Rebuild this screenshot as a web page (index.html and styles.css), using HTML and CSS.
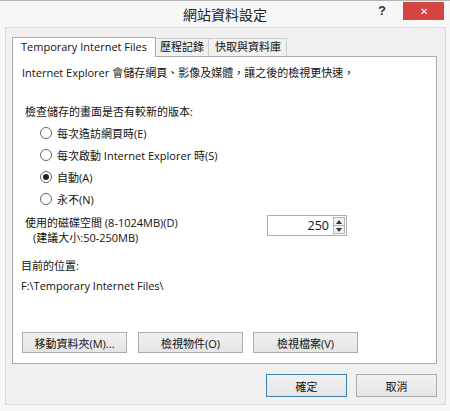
FILE: index.html
```html
<!DOCTYPE html>
<html lang="zh-Hant">
<head>
    <meta charset="UTF-8">
    <title>網站資料設定</title>
    <link rel="stylesheet" href="styles.css">
</head>
<body>
    <div class="window">
        <div class="titlebar">
            <span></span>
            <span class="title">網站資料設定</span>
            <div class="controls">
                <span class="help">?</span>
                <span class="close">&#x2715;</span>
            </div>
        </div>
        <div class="client">
            <div class="tabs">
                <span class="tab active">Temporary Internet Files</span>
                <span class="tab">歷程記錄</span>
                <span class="tab wide">快取與資料庫</span>
            </div>
            <div class="panel">
                <p class="intro">Internet Explorer 會儲存網頁、影像及媒體，讓之後的檢視更快速，</p>
                <p class="question">檢查儲存的畫面是否有較新的版本:</p>
                <div class="radios">
                    <label class="radio"><span class="dot"></span>每次造訪網頁時(E)</label>
                    <label class="radio"><span class="dot"></span>每次啟動 Internet Explorer 時(S)</label>
                    <label class="radio"><span class="dot checked"></span>自動(A)</label>
                    <label class="radio"><span class="dot"></span>永不(N)</label>
                </div>
                <div class="disk">
                    <div class="disk-label">
                        <span>使用的磁碟空間 (8-1024MB)(D)</span>
                        <span class="hint">(建議大小:50-250MB)</span>
                    </div>
                    <div class="spinner">
                        <span class="value">250</span>
                        <span class="arrows">
                            <span class="arrow">
                                <svg width="6" height="4" viewBox="0 0 6 4"><path d="M0 4 L3 0 L6 4 Z" fill="#333"/></svg>
                            </span>
                            <span class="arrow">
                                <svg width="6" height="4" viewBox="0 0 6 4"><path d="M0 0 L6 0 L3 4 Z" fill="#333"/></svg>
                            </span>
                        </span>
                    </div>
                </div>
                <p class="loc-label">目前的位置:</p>
                <p class="loc-path">F:\Temporary Internet Files\</p>
                <div class="panel-buttons">
                    <button class="btn">移動資料夾(M)...</button>
                    <button class="btn">檢視物件(O)</button>
                    <button class="btn">檢視檔案(V)</button>
                </div>
            </div>
            <div class="footer">
                <button class="btn default">確定</button>
                <button class="btn">取消</button>
            </div>
        </div>
    </div>
</body>
</html>
```

FILE: styles.css
```css
/* styles.css */

body {
    margin: 0;
    padding: 0;
    background-color: #ffffff;
    font-family: "Open Sans", "Noto Sans CJK TC", sans-serif;
    font-size: 11px;
    color: #111;
}

p {
    margin: 0;
}

.window {
    width: 450px;
    height: 411px;
    box-sizing: border-box;
    border-top: 1px solid #b4b4b4;
    background-color: #f7f7f7;
}

.titlebar {
    height: 26px;
    display: grid;
    grid-template-columns: 1fr auto 1fr;
    align-items: start;
}

.title {
    font-family: "Noto Sans CJK TC", sans-serif;
    font-size: 14px;
    line-height: 26px;
    color: #222;
}

.controls {
    display: flex;
    justify-content: flex-end;
}

.help {
    width: 16px;
    margin-right: 13px;
    line-height: 20px;
    font-family: "Liberation Sans", sans-serif;
    font-weight: bold;
    font-size: 13px;
    color: #333;
    text-align: center;
}

.close {
    width: 41px;
    height: 18px;
    margin-top: 1px;
    margin-right: 6px;
    background-color: #d54440;
    color: #fff;
    font-size: 10px;
    line-height: 18px;
    text-align: center;
}

.client {
    margin: 0 4px 0 5px;
    height: 378px;
    box-sizing: border-box;
    border: 1px solid #dadada;
    background-color: #f0f0f0;
    padding: 9px 0 0 6px;
}

.tabs {
    display: flex;
    align-items: flex-end;
    height: 19px;
}

.tab {
    height: 17px;
    line-height: 16px;
    padding: 0 4px;
    border: 1px solid #d0d0d0;
    border-bottom: none;
    background-color: #f0f0f0;
    margin-left: -1px;
    white-space: nowrap;
}

.tab.wide {
    padding: 0 5px 0 6px;
}

.tab.active {
    height: 19px;
    margin-left: 0;
    padding: 0 8px;
    line-height: 18px;
    background-color: #fff;
    border-color: #acacac;
    position: relative;
    z-index: 1;
    margin-bottom: -1px;
}

.panel {
    width: 425px;
    height: 308px;
    box-sizing: border-box;
    border: 1px solid #acacac;
    background-color: #fff;
    padding: 8px 0 0 9px;
}

.intro {
    line-height: 16px;
}

.question {
    margin-top: 23px;
    margin-left: 3px;
    line-height: 16px;
}

.radios {
    margin-top: 2px;
    display: flex;
    flex-direction: column;
}

.radio {
    height: 22px;
    display: flex;
    align-items: center;
    padding-left: 18px;
}

.dot {
    width: 10px;
    height: 10px;
    border: 1px solid #666;
    border-radius: 50%;
    margin-right: 5px;
    display: flex;
    align-items: center;
    justify-content: center;
    background-color: #fff;
}

.dot.checked::after {
    content: "";
    width: 6px;
    height: 6px;
    border-radius: 50%;
    background-color: #222;
}

.disk {
    margin-top: 5px;
    display: flex;
    justify-content: space-between;
    width: 322px;
    margin-left: 3px;
}

.disk-label {
    display: flex;
    flex-direction: column;
    line-height: 15px;
}

.hint {
    padding-left: 8px;
}

.spinner {
    width: 80px;
    height: 21px;
    box-sizing: border-box;
    border: 1px solid #abadb3;
    display: flex;
    align-items: center;
    justify-content: flex-end;
}

.value {
    font-size: 12.5px;
    line-height: 17px;
    margin-right: 4px;
}

.arrows {
    display: flex;
    flex-direction: column;
    height: 17px;
    width: 12px;
    margin-right: 1px;
}

.arrow {
    flex: 1;
    display: flex;
    align-items: center;
    justify-content: center;
    border: 1px solid #b5b5b5;
    background-color: #f0f0f0;
}

.arrow + .arrow {
    border-top: none;
}

.loc-label {
    margin-top: 13px;
    margin-left: -1px;
    line-height: 16px;
}

.loc-path {
    margin-top: 4px;
    margin-left: -1px;
    line-height: 16px;
}

.panel-buttons {
    margin-top: 38px;
    display: flex;
    gap: 11px;
}

.btn {
    width: 105px;
    height: 21px;
    padding: 0;
    font-family: "Open Sans", "Noto Sans CJK TC", sans-serif;
    font-size: 11px;
    color: #111;
    border: 1px solid #acacac;
    background: linear-gradient(#f0f0f0, #e5e5e5);
    border-radius: 0;
}

.panel-buttons .btn + .btn + .btn {
    margin-left: -1px;
}

.footer {
    display: flex;
    justify-content: flex-end;
    gap: 9px;
    margin-top: 10px;
    width: 425px;
}

.footer .btn {
    width: 81px;
    height: 23px;
}

.btn.default {
    border-color: #3c7fb1;
}
```
